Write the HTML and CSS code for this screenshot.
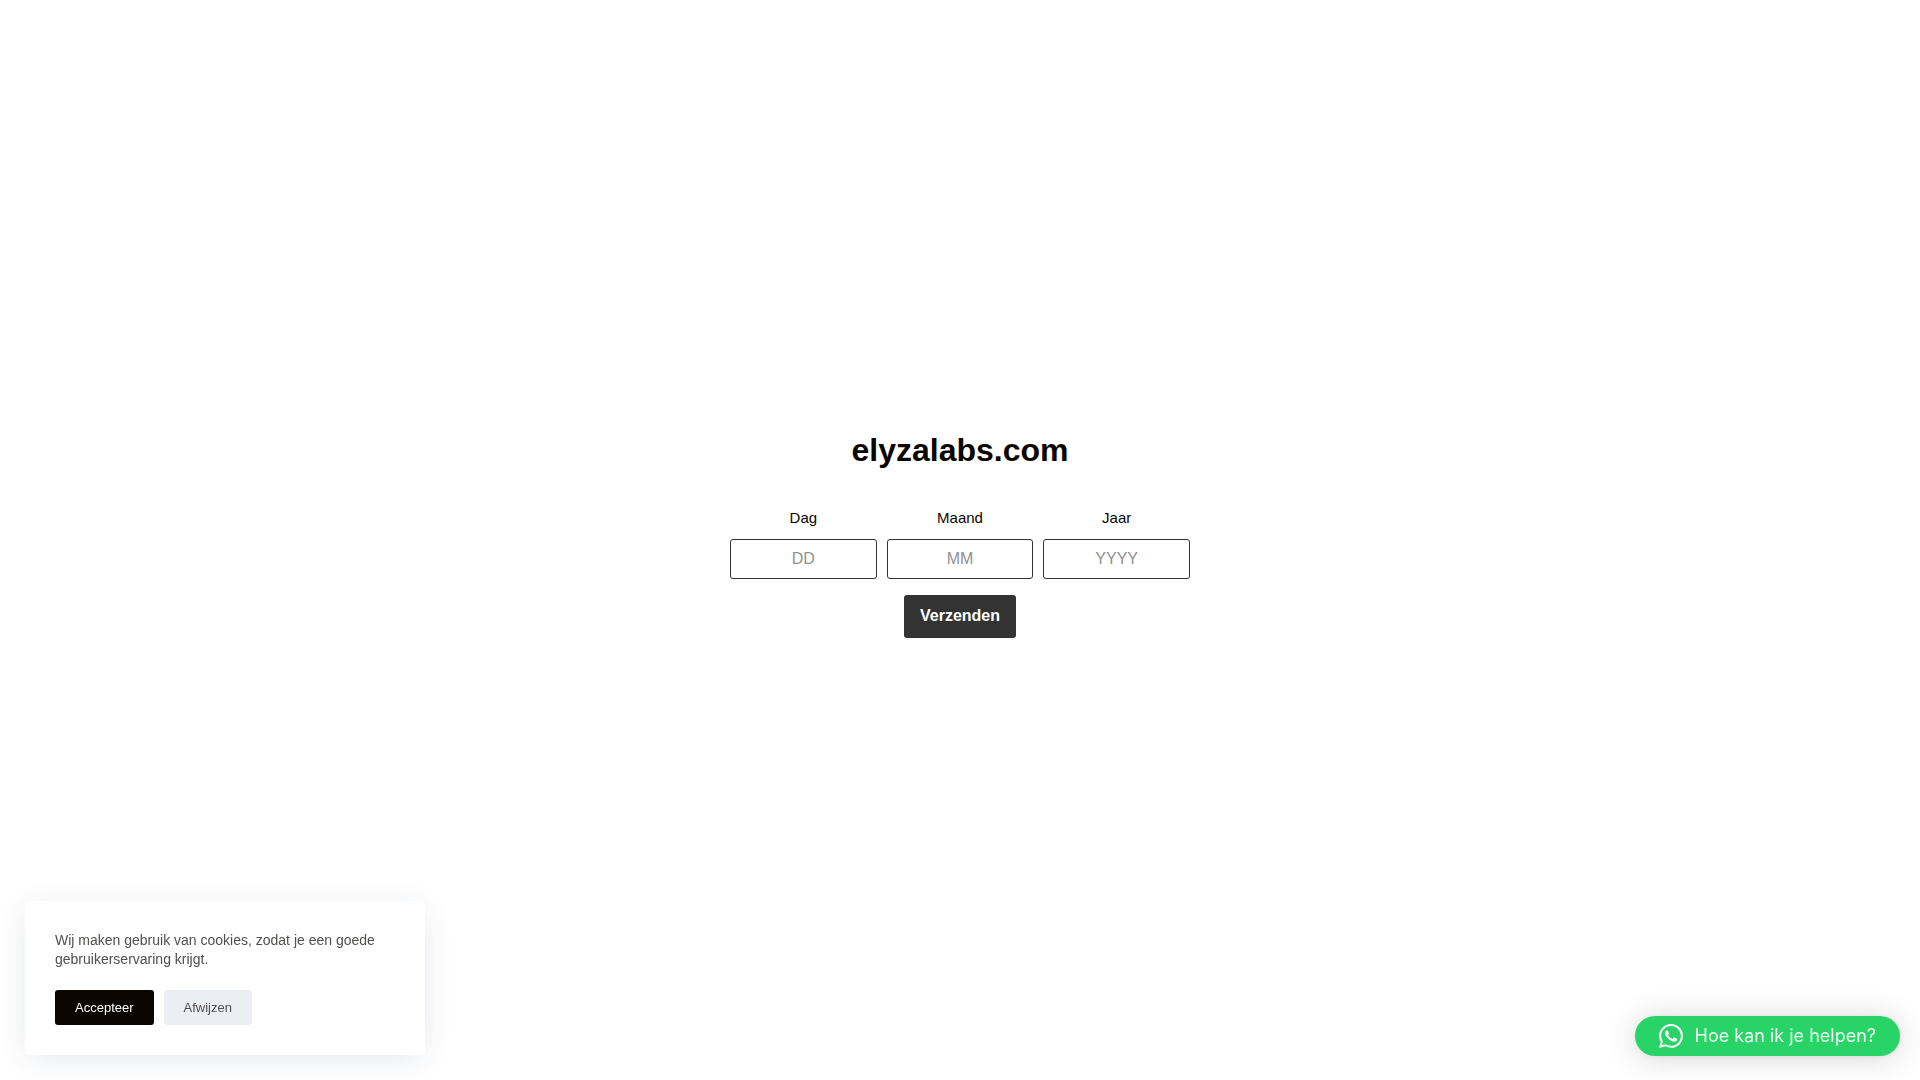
FILE: index.html
```
<!DOCTYPE html>
<html lang="nl">
<head>
    <meta charset="UTF-8">
    <meta name="viewport" content="width=device-width, initial-scale=1.0">
    <title>elyzalabs.com</title>
    <link rel="stylesheet" href="styles.css">
</head>
<body>
    <main class="age-gate">
        <h1>elyzalabs.com</h1>
        <form class="age-form">
            <div class="date-fields">
                <div class="field">
                    <label for="day">Dag</label>
                    <input type="text" id="day" placeholder="DD" maxlength="2" inputmode="numeric">
                </div>
                <div class="field">
                    <label for="month">Maand</label>
                    <input type="text" id="month" placeholder="MM" maxlength="2" inputmode="numeric">
                </div>
                <div class="field">
                    <label for="year">Jaar</label>
                    <input type="text" id="year" placeholder="YYYY" maxlength="4" inputmode="numeric">
                </div>
            </div>
            <button type="submit" class="submit-button">Verzenden</button>
        </form>
    </main>

    <div class="cookie-notice">
        <p>Wij maken gebruik van cookies, zodat je een goede gebruikerservaring krijgt.</p>
        <div class="cookie-actions">
            <button type="button" class="accept">Accepteer</button>
            <button type="button" class="decline">Afwijzen</button>
        </div>
    </div>

    <a href="#whatsapp" class="whatsapp-button">
        <svg viewBox="0 0 24 24" width="24" height="24" fill="#fff" aria-hidden="true">
            <path d="M17.472 14.382c-.297-.149-1.758-.867-2.03-.967-.273-.099-.471-.148-.67.15-.197.297-.767.966-.94 1.164-.173.199-.347.223-.644.075-.297-.15-1.255-.463-2.39-1.475-.883-.788-1.48-1.761-1.653-2.059-.173-.297-.018-.458.13-.606.134-.133.298-.347.446-.52.149-.174.198-.298.298-.497.099-.198.05-.371-.025-.52-.075-.149-.669-1.612-.916-2.207-.242-.579-.487-.5-.669-.51-.173-.008-.371-.01-.57-.01-.198 0-.52.074-.792.372-.272.297-1.04 1.016-1.04 2.479 0 1.462 1.065 2.875 1.213 3.074.149.198 2.096 3.2 5.077 4.487.709.306 1.262.489 1.694.625.712.227 1.36.195 1.871.118.571-.085 1.758-.719 2.006-1.413.248-.694.248-1.289.173-1.413-.074-.124-.272-.198-.57-.347m-5.421 7.403h-.004a9.87 9.87 0 01-5.031-1.378l-.361-.214-3.741.982.998-3.648-.235-.374a9.86 9.86 0 01-1.51-5.26c.001-5.45 4.436-9.884 9.888-9.884 2.64 0 5.122 1.03 6.988 2.898a9.825 9.825 0 012.893 6.994c-.003 5.45-4.437 9.884-9.885 9.884m8.413-18.297A11.815 11.815 0 0012.05 0C5.495 0 .16 5.335.157 11.892c0 2.096.547 4.142 1.588 5.945L.057 24l6.305-1.654a11.882 11.882 0 005.683 1.448h.005c6.554 0 11.89-5.335 11.893-11.893a11.821 11.821 0 00-3.48-8.413z"/>
        </svg>
        <span>Hoe kan ik je helpen?</span>
    </a>
</body>
</html>
```
FILE: styles.css
```
* {
    box-sizing: border-box;
}

body {
    margin: 0;
    min-height: 100vh;
    display: flex;
    align-items: center;
    justify-content: center;
    background-color: #fff;
    color: #0a0500;
    font-family: "Liberation Sans", Arial, sans-serif;
}

.age-gate {
    width: 100%;
    max-width: 460px;
    padding-bottom: 16px;
    text-align: center;
}

.age-gate h1 {
    margin: 0 0 32px;
    font-size: 32px;
    line-height: 48px;
}

.date-fields {
    display: flex;
    gap: 10px;
    margin-bottom: 16px;
}

.field {
    flex: 1;
    min-width: 0;
}

.field label {
    display: block;
    margin-bottom: 10px;
    font-size: 15px;
    line-height: 23px;
}

.field input {
    display: block;
    width: 100%;
    height: 40px;
    padding: 0 10px;
    border: 1px solid #333;
    border-radius: 3px;
    background-color: #fff;
    color: #333;
    font-family: inherit;
    font-size: 16px;
    text-align: center;
}

.field input::placeholder {
    color: #919191;
}

button {
    border: none;
    border-radius: 3px;
    font-family: inherit;
    cursor: pointer;
}

.submit-button {
    display: block;
    margin: 0 auto;
    padding: 12px 16px 13px;
    background-color: #333;
    color: #fff;
    font-size: 16px;
    font-weight: bold;
    line-height: 18px;
}

.cookie-notice {
    position: fixed;
    left: 25px;
    bottom: 25px;
    width: 400px;
    padding: 30px;
    border-radius: 3px;
    background-color: #fff;
    box-shadow: 0 5px 30px -5px rgba(34, 56, 101, 0.15);
}

.cookie-notice p {
    margin: 0 0 21px;
    color: #504f4d;
    font-size: 14px;
    line-height: 19px;
}

.cookie-actions {
    display: flex;
    gap: 10px;
}

.cookie-actions button {
    padding: 0 20px;
    font-size: 13px;
    line-height: 35px;
}

.cookie-actions .accept {
    background-color: #0a0500;
    color: #fff;
}

.cookie-actions .decline {
    background-color: #ebeff4;
    color: #504f4d;
}

.whatsapp-button {
    position: fixed;
    right: 20px;
    bottom: 24px;
    display: flex;
    align-items: center;
    gap: 12px;
    height: 40px;
    padding: 0 24px;
    border-radius: 20px;
    background-color: #28d468;
    box-shadow: 0 1px 6px rgba(0, 0, 0, 0.06), 0 2px 32px rgba(0, 0, 0, 0.16);
    color: #fff;
    font-family: Inter, sans-serif;
    font-size: 18px;
    line-height: 24px;
    text-decoration: none;
}

.whatsapp-button span {
    opacity: 0.9;
}
```
